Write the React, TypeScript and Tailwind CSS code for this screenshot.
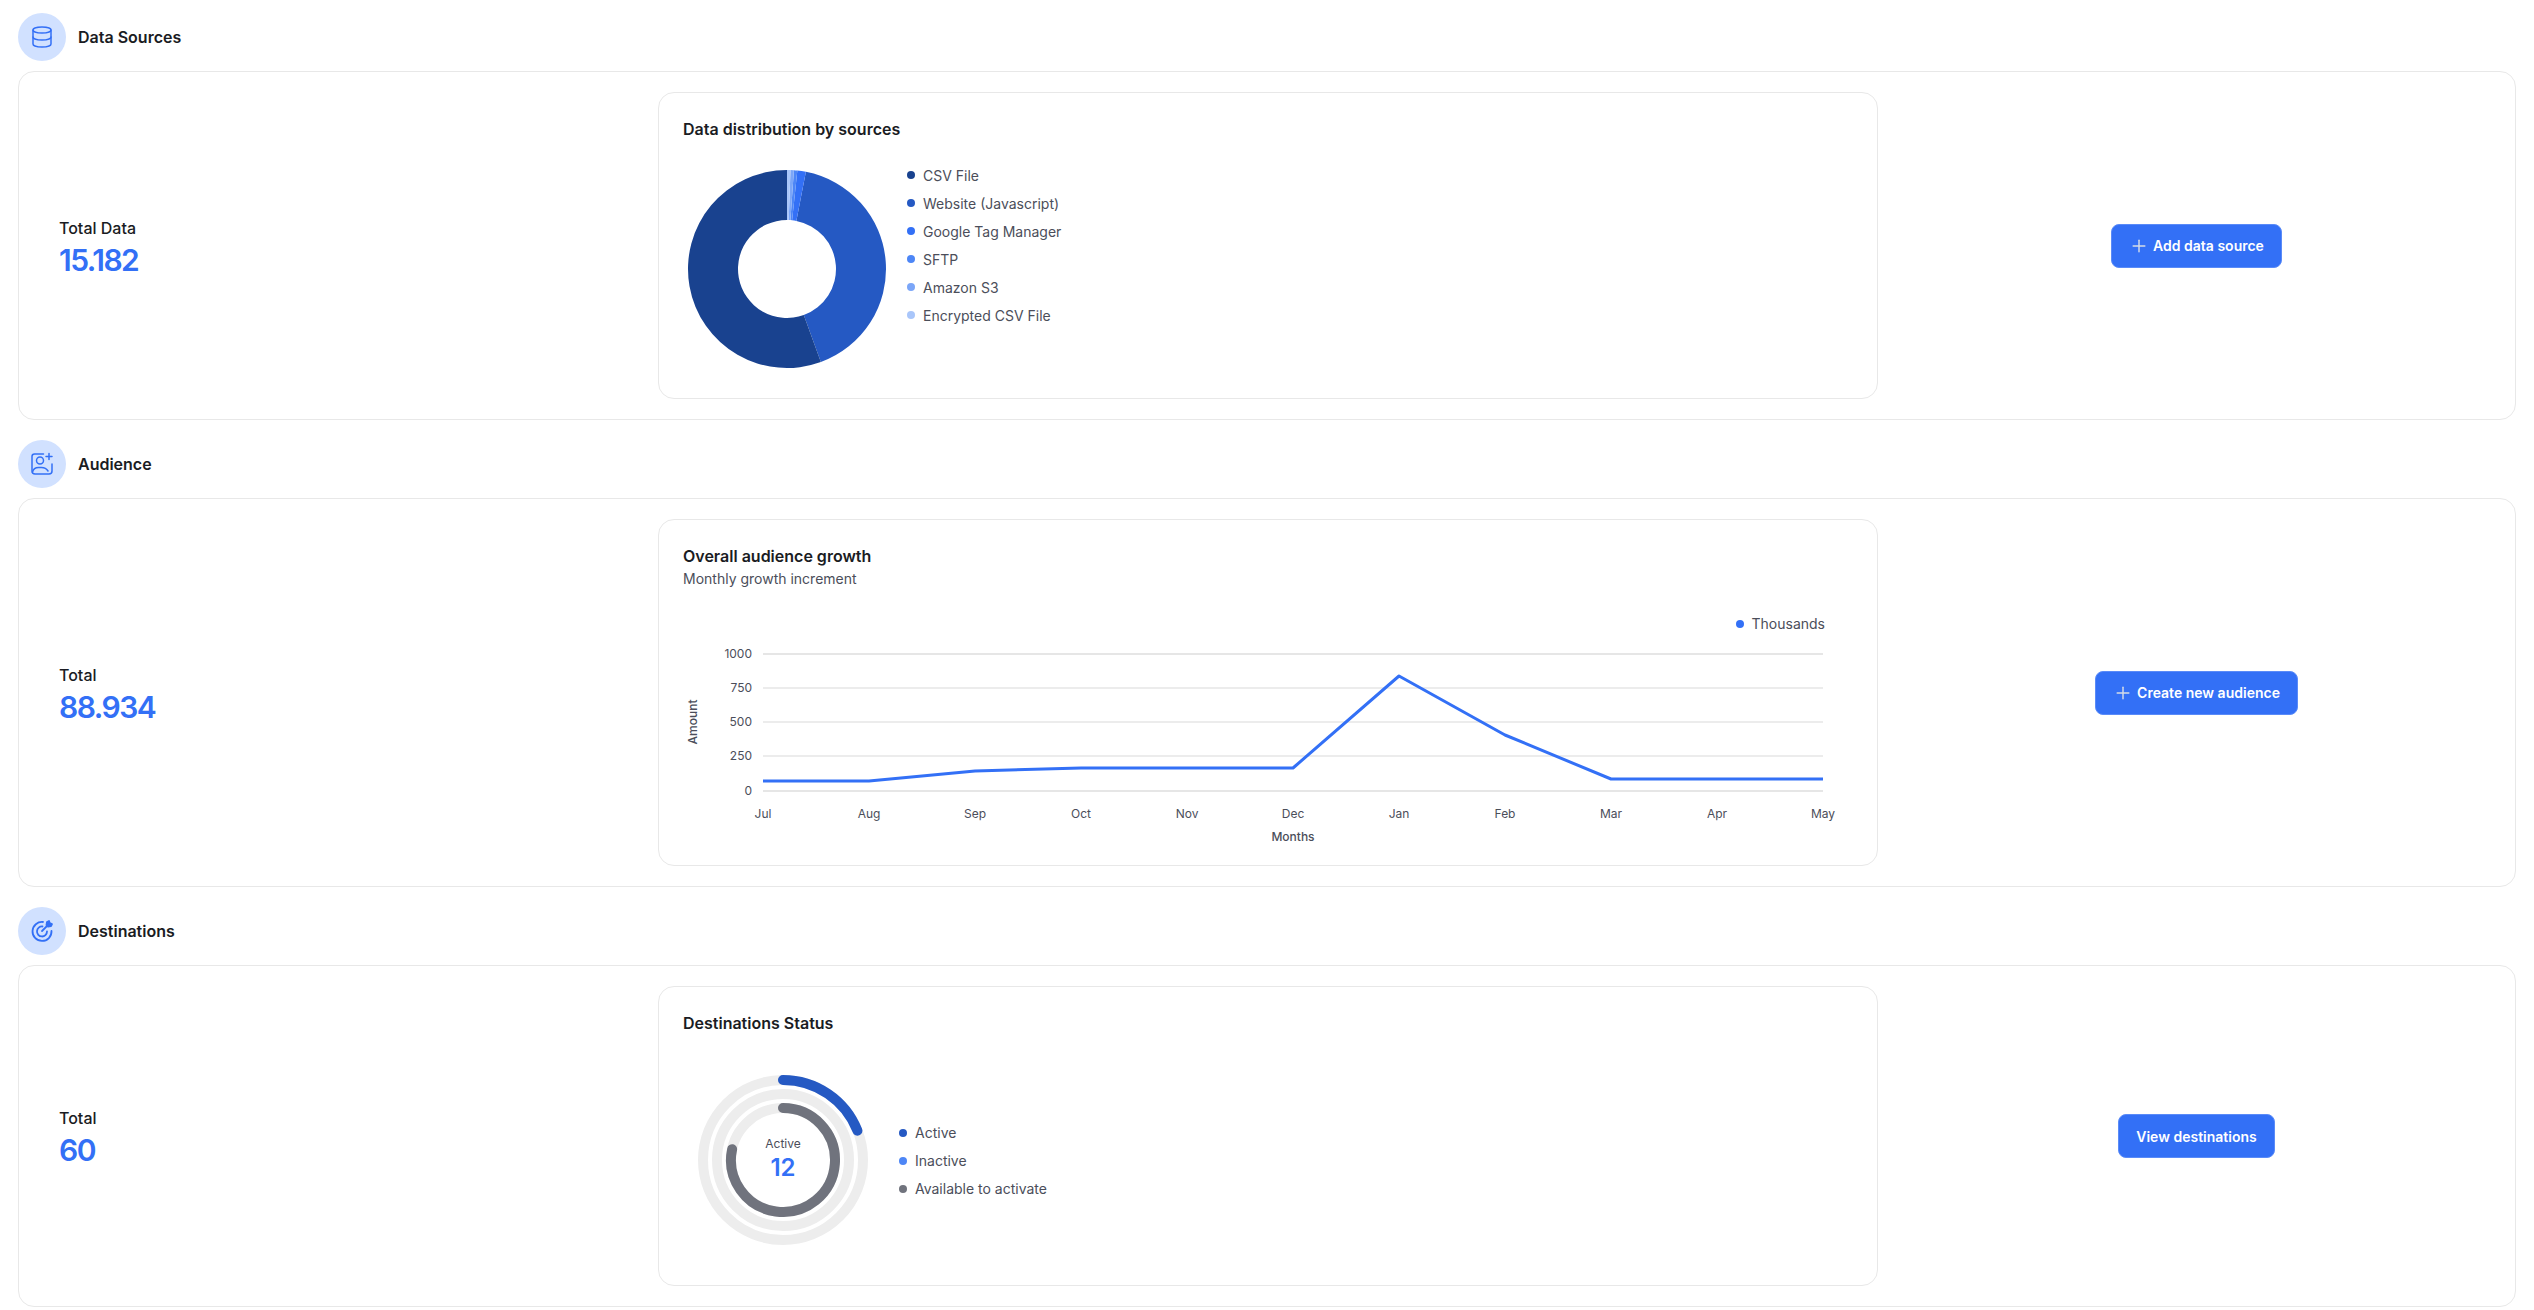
import { Database, Plus } from "lucide-react";
import type { ReactNode } from "react";

const blue = "#3370f6";

function polar(cx: number, cy: number, r: number, deg: number) {
  const a = ((deg - 90) * Math.PI) / 180;
  return [cx + r * Math.cos(a), cy + r * Math.sin(a)];
}

function slice(cx: number, cy: number, ro: number, ri: number, from: number, to: number) {
  const [x1, y1] = polar(cx, cy, ro, from);
  const [x2, y2] = polar(cx, cy, ro, to);
  const [x3, y3] = polar(cx, cy, ri, to);
  const [x4, y4] = polar(cx, cy, ri, from);
  const large = to - from > 180 ? 1 : 0;
  return `M${x1} ${y1}A${ro} ${ro} 0 ${large} 1 ${x2} ${y2}L${x3} ${y3}A${ri} ${ri} 0 ${large} 0 ${x4} ${y4}Z`;
}

function arc(cx: number, cy: number, r: number, to: number) {
  const [x1, y1] = polar(cx, cy, r, 0);
  const [x2, y2] = polar(cx, cy, r, to);
  return `M${x1} ${y1}A${r} ${r} 0 ${to > 180 ? 1 : 0} 1 ${x2} ${y2}`;
}

function AudienceIcon() {
  return (
    <svg width="24" height="24" viewBox="0 0 24 24" fill="none" stroke={blue} strokeWidth="1.5" strokeLinecap="round" strokeLinejoin="round">
      <path d="M13.5 2H4.5A2.5 2.5 0 0 0 2 4.5v14.5A3 3 0 0 0 5 22h14a3 3 0 0 0 3-3v-7" />
      <circle cx="10" cy="8.5" r="3.5" />
      <path d="M2.5 20c.8-3 3.2-4.5 6-4.5h3c2.8 0 5 1 6.5 3.5" />
      <path d="M19 1.5v6M16 4.5h6" />
    </svg>
  );
}

function TargetIcon() {
  return (
    <svg width="24" height="24" viewBox="0 0 24 24" fill="none" stroke={blue} strokeWidth="1.8" strokeLinecap="round" strokeLinejoin="round">
      <path d="M13 3a9.5 9.5 0 1 0 8.5 9" />
      <path d="M12.5 7.5a5 5 0 1 0 4.5 5" />
      <path d="M12 12l5-5" />
      <path d="M16.5 6l.5-3 2-1 .8 2.2L22 5l-1 2-3 .5z" fill={blue} />
    </svg>
  );
}

function Section({ icon, title, children }: { icon: ReactNode; title: string; children: ReactNode }) {
  return (
    <section>
      <div className="flex items-center gap-3 mb-[10px]">
        <div className="w-12 h-12 rounded-full bg-[#d1e1ff] flex items-center justify-center">{icon}</div>
        <h2 className="text-[16px] font-semibold text-[#1a1c23]">{title}</h2>
      </div>
      {children}
    </section>
  );
}

function Row({ label, value, children, action }: { label: string; value: string; children: ReactNode; action: ReactNode }) {
  return (
    <div className="border border-[#e8e8e8] rounded-2xl py-5 pl-5 flex items-center">
      <div className="w-[619px] pl-5 pt-1">
        <p className="text-[16px] leading-6 font-medium text-[#1a1c23]">{label}</p>
        <p className="text-[30px] leading-[40px] font-semibold tracking-[-0.05em]" style={{ color: blue }}>{value}</p>
      </div>
      <div className="w-[1220px] border border-[#e8e8e8] rounded-2xl p-6">{children}</div>
      <div className="flex-1 flex justify-center">{action}</div>
    </div>
  );
}

function Action({ label, plus }: { label: string; plus?: boolean }) {
  return (
    <button className="h-11 px-[17px] rounded-lg bg-[#3370f6] border border-[#5a8bf8] text-white text-[14px] font-semibold flex items-center gap-1">
      {plus && <Plus size={20} strokeWidth={1.75} className="text-[#d5dbe6]" />}
      {label}
    </button>
  );
}

function Legend({ items }: { items: [string, string][] }) {
  return (
    <ul className="flex flex-col">
      {items.map(([name, color]) => (
        <li key={name} className="h-7 flex items-center gap-2 text-[14px] text-[#4b4e5a]">
          <span className="w-2 h-2 rounded-full" style={{ background: color }} />
          {name}
        </li>
      ))}
    </ul>
  );
}

function Donut() {
  return (
    <svg width="200" height="200" viewBox="0 0 200 200">
      <path d={slice(100, 100, 99, 49, 11, 160)} fill="#2559c3" />
      <path d={slice(100, 100, 99, 49, 160, 360)} fill="#19428f" />
      <path d={slice(100, 100, 99, 49, 6, 11)} fill="#3370f6" />
      <path d={slice(100, 100, 99, 49, 4, 6)} fill="#4d86f6" />
      <path d={slice(100, 100, 99, 49, 2, 4)} fill="#7ba6f8" />
      <path d={slice(100, 100, 99, 49, 0, 2)} fill="#a9c6fa" />
    </svg>
  );
}

function GrowthChart() {
  const months = ["Jul", "Aug", "Sep", "Oct", "Nov", "Dec", "Jan", "Feb", "Mar", "Apr", "May"];
  const ys = [127, 127, 117, 114, 114, 114, 22, 81, 125, 125, 125];
  const grid = [[1000, 0], [750, 34], [500, 68], [250, 102], [0, 137]];
  const left = 80;
  const step = 106;
  const points = ys.map((y, i) => `${left + i * step},${y}`).join(" ");
  return (
    <svg width="1170" height="206" viewBox="0 -11 1170 206" className="block -mb-2" fontFamily="Inter, sans-serif">
      {grid.map(([label, y]) => (
        <g key={label}>
          <line x1={left} x2={left + step * 10} y1={y} y2={y} stroke="#e6e6e6" strokeWidth={y === 0 || y === 137 ? 2 : 1.5} />
          <text x={left - 11} y={y + 4} textAnchor="end" fontSize="12" fill="#4b4e5a">{label}</text>
        </g>
      ))}
      {months.map((m, i) => (
        <text key={m} x={left + i * step} y={164} textAnchor="middle" fontSize="12" fill="#4b4e5a">{m}</text>
      ))}
      <text x={left + 5 * step} y={187} textAnchor="middle" fontSize="12" fontWeight="500" fill="#4b4e5a">Months</text>
      <text transform="translate(14 68) rotate(-90)" textAnchor="middle" fontSize="12" fontWeight="500" fill="#4b4e5a">Amount</text>
      <polyline points={points} fill="none" stroke={blue} strokeWidth="3" strokeLinejoin="round" />
    </svg>
  );
}

function StatusRings() {
  return (
    <div className="relative w-[172px] h-[172px]">
      <svg width="172" height="172" viewBox="0 0 172 172" fill="none" strokeWidth="10" strokeLinecap="round">
        <circle cx="86" cy="86" r="80" stroke="#ededed" />
        <circle cx="86" cy="86" r="66" stroke="#ededed" />
        <circle cx="86" cy="86" r="52" stroke="#ededed" />
        <path d={arc(86, 86, 80, 68.5)} stroke="#2559c3" />
        <path d={arc(86, 86, 52, 282)} stroke="#70737d" />
      </svg>
      <div className="absolute inset-0 flex flex-col items-center justify-center">
        <span className="text-[12px] leading-4 text-[#4b4e5a]">Active</span>
        <span className="text-[24px] leading-8 font-semibold" style={{ color: blue }}>12</span>
      </div>
    </div>
  );
}

export default function App() {
  return (
    <div className="bg-white min-h-[1310px] px-[18px] pt-[13px] flex flex-col gap-5 font-['Inter',sans-serif]">
      <Section icon={<Database size={24} strokeWidth={1.5} color={blue} />} title="Data Sources">
        <Row label="Total Data" value="15.182" action={<Action label="Add data source" plus />}>
          <h3 className="text-[16px] leading-6 font-semibold text-[#1a1c23] mb-7">Data distribution by sources</h3>
          <div className="flex items-start gap-5 h-[205px] pl-1">
            <Donut />
            <div className="-mt-[8px]">
              <Legend
                items={[
                  ["CSV File", "#19428f"],
                  ["Website (Javascript)", "#2559c3"],
                  ["Google Tag Manager", "#3370f6"],
                  ["SFTP", "#4d86f6"],
                  ["Amazon S3", "#7ba6f8"],
                  ["Encrypted CSV File", "#a9c6fa"],
                ]}
              />
            </div>
          </div>
        </Row>
      </Section>

      <Section icon={<AudienceIcon />} title="Audience">
        <Row label="Total" value="88.934" action={<Action label="Create new audience" plus />}>
          <h3 className="text-[16px] leading-6 font-semibold text-[#1a1c23]">Overall audience growth</h3>
          <p className="text-[14px] leading-[22px] text-[#4b4e5a]">Monthly growth increment</p>
          <div className="relative pt-[53px]">
            <div className="absolute right-[28px] top-[23px]">
              <div className="flex items-center gap-2 text-[14px] text-[#4b4e5a]">
                <span className="w-2 h-2 rounded-full bg-[#3370f6]" />
                Thousands
              </div>
            </div>
            <GrowthChart />
          </div>
        </Row>
      </Section>

      <Section icon={<TargetIcon />} title="Destinations">
        <Row label="Total" value="60" action={<Action label="View destinations" />}>
          <h3 className="text-[16px] leading-6 font-semibold text-[#1a1c23] mb-[23px]">Destinations Status</h3>
          <div className="flex items-center gap-[30px] h-[203px] pl-[14px]">
            <StatusRings />
            <div className="mt-[2px]">
              <Legend
                items={[
                  ["Active", "#2559c3"],
                  ["Inactive", "#4d86f6"],
                  ["Available to activate", "#70737d"],
                ]}
              />
            </div>
          </div>
        </Row>
      </Section>
    </div>
  );
}
